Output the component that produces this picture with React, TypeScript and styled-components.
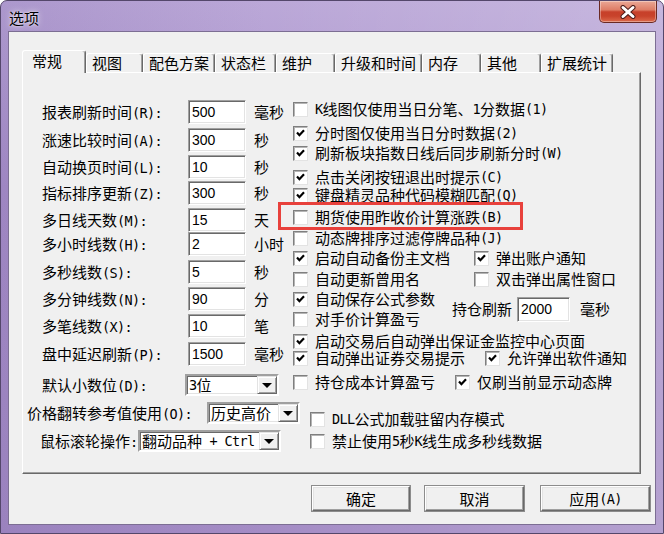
import React from "react";
import styled, { createGlobalStyle } from "styled-components";

const CJK = `"Noto Sans CJK SC", "Noto Sans CJK JP", sans-serif`;

const GlobalStyle = createGlobalStyle`
  html, body { margin: 0; padding: 0; }
  body {
    width: 664px; height: 534px; overflow: hidden; background: #ffffff;
    font-family: ${CJK}; font-size: 15px; color: #000;
  }
`;

const Window = styled.div`
  width: 664px; height: 534px; box-sizing: border-box;
  display: flex; flex-direction: column;
  border: 1px solid #54476b;
  border-radius: 7px 7px 0 0;
  background:
    linear-gradient(90deg, rgba(120, 95, 165, 0.22) 0%, rgba(255, 255, 255, 0) 40%, rgba(255, 255, 255, 0.18) 100%),
    linear-gradient(180deg, #bba8d8 0%, #a991ca 35%, #a48cc5 100%);
  overflow: hidden;
`;

const TitleBar = styled.div`
  height: 30px; flex: none;
  display: flex; align-items: flex-start;
  padding-left: 8px;
`;

const Title = styled.div`
  margin-top: 7px; line-height: 20px; font-size: 15px; color: #000;
  text-shadow: 0 0 6px rgba(255, 255, 255, 0.9), 0 0 2px rgba(255, 255, 255, 0.8);
`;

const CloseButton = styled.div`
  margin-left: auto; margin-right: 6px;
  width: 58px; height: 22px; box-sizing: border-box;
  border: 1px solid #6a2a23; border-top: none;
  border-radius: 0 0 5px 5px;
  background: linear-gradient(180deg, #eaa896 0%, #de7d66 42%, #c7402a 52%, #c8432b 72%, #dc6a4c 100%);
  box-shadow: inset 0 0 0 1px rgba(255, 255, 255, 0.35);
  display: flex; align-items: center; justify-content: center;
`;

const Frame = styled.div`
  flex: 1; min-height: 0;
  display: flex;
  padding: 0 7px 8px 7px;
`;

const Client = styled.div`
  flex: 1; box-sizing: border-box;
  background: #f0f0f0;
  border: 1px solid #7c6e93;
  padding: 18px 0 0 13px;
  display: flex; flex-direction: column;
`;

const TabStrip = styled.div`
  display: flex; align-items: flex-end;
  height: 23px; position: relative; z-index: 1;
  margin-bottom: -1px;
`;

const Tab = styled.div<{ $w: number; $active?: boolean }>`
  width: ${(p) => p.$w}px;
  height: ${(p) => (p.$active ? 23 : 19)}px;
  margin-bottom: ${(p) => (p.$active ? 0 : 1)}px;
  box-sizing: border-box; flex: none;
  background: #f0f0f0;
  border-top: 1px solid #ffffff;
  border-left: 1px solid #ffffff;
  border-right: 1px solid #696969;
  box-shadow: inset -1px 0 #a0a0a0;
  border-radius: 3px 3px 0 0;
  padding-left: ${(p) => (p.$active ? 9 : 5)}px;
  line-height: ${(p) => (p.$active ? 20 : 17)}px;
  white-space: nowrap;
`;

const Panel = styled.div`
  position: relative;
  width: 619px; height: 402px; box-sizing: border-box;
  border-top: 1px solid #ffffff;
  border-left: 1px solid #ffffff;
  border-right: 1px solid #696969;
  border-bottom: 1px solid #696969;
  box-shadow: inset -1px -1px #a0a0a0;
  display: flex; flex-direction: column;
`;

const TopSection = styled.div`
  display: flex; align-items: flex-start;
`;

const LeftCol = styled.div`
  width: 270px; flex: none; box-sizing: border-box;
  padding-left: 19px;
  display: flex; flex-direction: column;
`;

const FieldRow = styled.div<{ $mt: number; $h?: number }>`
  display: flex; align-items: center;
  height: ${(p) => p.$h ?? 24}px;
  margin-top: ${(p) => p.$mt}px;
`;

const FieldLabel = styled.div<{ $w: number }>`
  width: ${(p) => p.$w}px; flex: none;
  white-space: nowrap; line-height: 20px;
`;

const Unit = styled.div`
  margin-left: 8px; white-space: nowrap; line-height: 20px;
`;

const TextBox = styled.div<{ $w: number; $h?: number }>`
  width: ${(p) => p.$w}px; height: ${(p) => p.$h ?? 24}px;
  box-sizing: border-box; flex: none;
  background: #ffffff;
  border: 1px solid; border-color: #a0a0a0 #ffffff #ffffff #a0a0a0;
  box-shadow: inset 1px 1px #696969, inset -1px -1px #e3e3e3;
  padding-left: 3px;
  font-family: "Liberation Sans", ${CJK};
  font-size: 14px;
  line-height: 16px;
  display: flex; align-items: center;
`;

const RightCol = styled.div`
  flex: 1;
  display: flex; flex-direction: column;
`;

const CheckRow = styled.div<{ $mt?: number }>`
  display: flex; align-items: center;
  height: 18px;
  margin-top: ${(p) => p.$mt ?? 0}px;
  white-space: nowrap;
`;

const CheckItem = styled.div<{ $w?: number }>`
  display: flex; align-items: center;
  flex: none;
  width: ${(p) => (p.$w ? `${p.$w}px` : "auto")};
  line-height: 16px;
`;

const Box = styled.span`
  width: 15px; height: 15px; box-sizing: border-box; flex: none;
  background: #ffffff;
  border: 1px solid; border-color: #7f7f7f #e3e3e3 #e3e3e3 #7f7f7f;
  box-shadow: inset 1px 1px #b4b4b4;
  margin-right: 7px;
  display: flex; align-items: center; justify-content: center;
`;

const Block = styled.div<{ $mt: number }>`
  display: flex; align-items: center;
  margin-top: ${(p) => p.$mt}px;
`;

const BlockCol = styled.div`
  width: 159px; flex: none;
  display: flex; flex-direction: column;
`;

const HoldLabel = styled.div`
  width: 60px; flex: none; white-space: nowrap; line-height: 20px;
`;

const HoldUnit = styled.div`
  margin-left: 10px; white-space: nowrap; line-height: 20px;
`;

const HoldInput = styled(TextBox)`
  margin-left: 5px;
`;

const BottomSection = styled.div<{ $mt: number }>`
  display: flex; align-items: flex-start;
  margin-top: ${(p) => p.$mt}px;
`;

const BottomLeft = styled.div`
  width: 287px; flex: none;
  display: flex; flex-direction: column;
`;

const SelRow = styled.div<{ $pl: number; $mt: number }>`
  display: flex; align-items: center;
  padding-left: ${(p) => p.$pl}px;
  margin-top: ${(p) => p.$mt}px;
  height: 22px;
`;

const BottomRight = styled.div<{ $mt: number }>`
  display: flex; flex-direction: column;
  margin-top: ${(p) => p.$mt}px;
`;

const SelectBox = styled.div<{ $w: number; $ml?: number }>`
  width: ${(p) => p.$w}px; height: 22px; flex: none;
  margin-left: ${(p) => p.$ml ?? 0}px;
  box-sizing: border-box;
  background: #ffffff;
  border: 2px solid; border-color: #a0a0a0 #ffffff #ffffff #a0a0a0;
  box-shadow: inset 1px 1px #696969, inset -1px -1px #e3e3e3;
  display: flex; align-items: stretch;
`;

const SelectText = styled.span`
  flex: 1; min-width: 0;
  padding-left: 2px;
  display: flex; align-items: center;
  line-height: 16px; white-space: nowrap;
`;

const ArrowBtn = styled.span`
  width: 20px; flex: none; box-sizing: border-box;
  background: #f0f0f0;
  border: 1px solid; border-color: #e3e3e3 #696969 #696969 #e3e3e3;
  box-shadow: inset 1px 1px #ffffff, inset -1px -1px #a0a0a0;
  display: flex; align-items: center; justify-content: center;
  &::after {
    content: "";
    width: 0; height: 0;
    border-left: 5px solid transparent;
    border-right: 5px solid transparent;
    border-top: 5px solid #000;
  }
`;

const ButtonRow = styled.div`
  display: flex;
  margin-top: 12px;
  padding-left: 290px;
`;

const Button = styled.div<{ $w: number; $ml?: number }>`
  width: ${(p) => p.$w}px; height: 25px; flex: none;
  margin-left: ${(p) => p.$ml ?? 0}px;
  box-sizing: border-box;
  background: #f0f0f0;
  border: 1px solid; border-color: #ffffff #696969 #696969 #ffffff;
  box-shadow: inset -1px -1px #a0a0a0, inset 1px 1px #e3e3e3, 0 0 0 1px #8c8c8c;
  display: flex; align-items: center; justify-content: center;
  line-height: 20px;
`;

const Annotation = styled.div`
  position: absolute;
  left: 255px; top: 129px;
  width: 245px; height: 28px;
  box-sizing: border-box;
  border: 3px solid #e8413c;
  pointer-events: none;
`;

const Latin = styled.span`
  font-family: "DejaVu Sans Mono", "Liberation Mono", monospace;
  font-size: 13.5px;
  letter-spacing: -0.63px;
  white-space: pre;
  line-height: 16px;
`;

const Txt = ({ s }: { s: string }) => (
  <>
    {s.split(/([\x20-\x7e]+)/).map((part, i) =>
      /[\x20-\x7e]/.test(part) ? <Latin key={i}>{part}</Latin> : part ? <React.Fragment key={i}>{part}</React.Fragment> : null
    )}
  </>
);

const Check = () => (
  <svg width="9" height="8" viewBox="0 0 9 8">
    <polyline points="1,3.6 3.4,6.2 8,1.2" fill="none" stroke="#000" strokeWidth="2.2" />
  </svg>
);

const CheckBox = ({ label, checked, w }: { label: string; checked: boolean; w?: number }) => (
  <CheckItem $w={w}>
    <Box>{checked ? <Check /> : null}</Box>
    <Txt s={label} />
  </CheckItem>
);

const Select = ({ value, w, ml }: { value: string; w: number; ml?: number }) => (
  <SelectBox $w={w} $ml={ml}>
    <SelectText>
      <Txt s={value} />
    </SelectText>
    <ArrowBtn />
  </SelectBox>
);

const tabs = [
  { label: "常规", w: 64, active: true },
  { label: "视图", w: 57 },
  { label: "配色方案", w: 72 },
  { label: "状态栏", w: 61 },
  { label: "维护", w: 59 },
  { label: "升级和时间", w: 87 },
  { label: "内存", w: 59 },
  { label: "其他", w: 60 },
  { label: "扩展统计", w: 72 },
];

const fields = [
  { label: "报表刷新时间(R):", value: "500", unit: "毫秒", mt: 27 },
  { label: "涨速比较时间(A):", value: "300", unit: "秒", mt: 4 },
  { label: "自动换页时间(L):", value: "10", unit: "秒", mt: 3 },
  { label: "指标排序更新(Z):", value: "300", unit: "秒", mt: 2 },
  { label: "多日线天数(M):", value: "15", unit: "天", mt: 3 },
  { label: "多小时线数(H):", value: "2", unit: "小时", mt: 0 },
  { label: "多秒线数(S):", value: "5", unit: "秒", mt: 4 },
  { label: "多分钟线数(N):", value: "90", unit: "分", mt: 3 },
  { label: "多笔线数(X):", value: "10", unit: "笔", mt: 3 },
  { label: "盘中延迟刷新(P):", value: "1500", unit: "毫秒", mt: 4 },
];

type Item = { label: string; checked: boolean; w?: number };
const checksTop: { mt: number; items: Item[] }[] = [
  { mt: 27, items: [{ label: "K线图仅使用当日分笔、1分数据(1)", checked: false }] },
  { mt: 6, items: [{ label: "分时图仅使用当日分时数据(2)", checked: true }] },
  { mt: 2, items: [{ label: "刷新板块指数日线后同步刷新分时(W)", checked: true }] },
  { mt: 6, items: [{ label: "点击关闭按钮退出时提示(C)", checked: true }] },
  { mt: 0, items: [{ label: "键盘精灵品种代码模糊匹配(Q)", checked: true }] },
  { mt: 4, items: [{ label: "期货使用昨收价计算涨跌(B)", checked: false }] },
  { mt: 3, items: [{ label: "动态牌排序过滤停牌品种(J)", checked: false }] },
  {
    mt: 2,
    items: [
      { label: "启动自动备份主文档", checked: true, w: 181 },
      { label: "弹出账户通知", checked: true },
    ],
  },
  {
    mt: 3,
    items: [
      { label: "自动更新曾用名", checked: false, w: 181 },
      { label: "双击弹出属性窗口", checked: false },
    ],
  },
];

const checksBottom: { mt: number; items: Item[] }[] = [
  { mt: 4, items: [{ label: "启动交易后自动弹出保证金监控中心页面", checked: true }] },
  {
    mt: -1,
    items: [
      { label: "自动弹出证券交易提示", checked: true, w: 192 },
      { label: "允许弹出软件通知", checked: true },
    ],
  },
  {
    mt: 6,
    items: [
      { label: "持仓成本计算盈亏", checked: false, w: 162 },
      { label: "仅刷当前显示动态牌", checked: true },
    ],
  },
];

const renderRows = (rows: { mt: number; items: Item[] }[]) =>
  rows.map((r, i) => (
    <CheckRow key={i} $mt={r.mt}>
      {r.items.map((it, j) => (
        <CheckBox key={j} label={it.label} checked={it.checked} w={it.w} />
      ))}
    </CheckRow>
  ));

export default function App() {
  return (
    <>
      <GlobalStyle />
      <Window>
        <TitleBar>
          <Title>选项</Title>
          <CloseButton>
            <svg width="18" height="14" viewBox="0 0 18 14">
              <path d="M4 2.5 L14 11.5 M14 2.5 L4 11.5" stroke="#4d1d1a" strokeWidth="5" strokeLinecap="round" />
              <path d="M4 2.5 L14 11.5 M14 2.5 L4 11.5" stroke="#ffffff" strokeWidth="3" strokeLinecap="round" />
            </svg>
          </CloseButton>
        </TitleBar>
        <Frame>
          <Client>
            <TabStrip>
              {tabs.map((t) => (
                <Tab key={t.label} $w={t.w} $active={t.active}>
                  {t.label}
                </Tab>
              ))}
            </TabStrip>
            <Panel>
              <TopSection>
                <LeftCol>
                  {fields.map((f) => (
                    <FieldRow key={f.label} $mt={f.mt}>
                      <FieldLabel $w={146}>
                        <Txt s={f.label} />
                      </FieldLabel>
                      <TextBox $w={58}>{f.value}</TextBox>
                      <Unit>{f.unit}</Unit>
                    </FieldRow>
                  ))}
                  <FieldRow $mt={8} $h={22}>
                    <FieldLabel $w={143}>
                      <Txt s="默认小数位(D):" />
                    </FieldLabel>
                    <Select value="3位" w={94} />
                  </FieldRow>
                </LeftCol>
                <RightCol>
                  {renderRows(checksTop)}
                  <Block $mt={2}>
                    <BlockCol>
                      <CheckRow>
                        <CheckBox label="自动保存公式参数" checked />
                      </CheckRow>
                      <CheckRow $mt={2}>
                        <CheckBox label="对手价计算盈亏" checked={false} />
                      </CheckRow>
                    </BlockCol>
                    <HoldLabel>持仓刷新</HoldLabel>
                    <HoldInput $w={53} $h={25}>2000</HoldInput>
                    <HoldUnit>毫秒</HoldUnit>
                  </Block>
                  {renderRows(checksBottom)}
                </RightCol>
              </TopSection>
              <BottomSection $mt={6}>
                <BottomLeft>
                  <SelRow $pl={4} $mt={0}>
                    <FieldLabel $w={180}>
                      <Txt s="价格翻转参考值使用(O):" />
                    </FieldLabel>
                    <Select value="历史高价" w={93} />
                  </SelRow>
                  <SelRow $pl={17} $mt={6}>
                    <FieldLabel $w={98}>
                      <Txt s="鼠标滚轮操作:" />
                    </FieldLabel>
                    <Select value="翻动品种 + Ctrl" w={143} />
                  </SelRow>
                </BottomLeft>
                <BottomRight $mt={8}>
                  <CheckRow>
                    <CheckBox label="DLL公式加载驻留内存模式" checked={false} />
                  </CheckRow>
                  <CheckRow $mt={4}>
                    <CheckBox label="禁止使用5秒K线生成多秒线数据" checked={false} />
                  </CheckRow>
                </BottomRight>
              </BottomSection>
              <Annotation />
            </Panel>
            <ButtonRow>
              <Button $w={98}>确定</Button>
              <Button $w={99} $ml={15}>取消</Button>
              <Button $w={109} $ml={17}>
                <Txt s="应用(A)" />
              </Button>
            </ButtonRow>
          </Client>
        </Frame>
      </Window>
    </>
  );
}
